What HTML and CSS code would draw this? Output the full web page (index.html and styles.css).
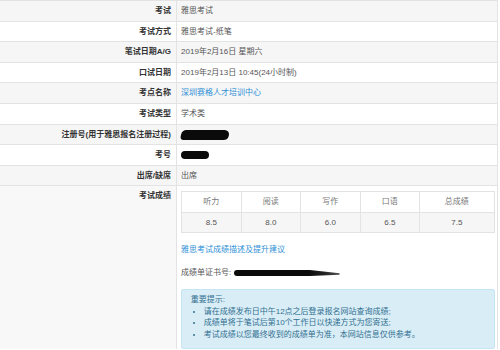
FILE: index.html
```html
<!DOCTYPE html>
<html lang="zh-CN">
<head>
    <meta charset="UTF-8">
    <meta name="viewport" content="width=device-width, initial-scale=1.0">
    <title>雅思成绩查询</title>
    <link rel="stylesheet" href="styles.css">
</head>
<body>
    <table class="info-table">
        <tr>
            <th>考试</th>
            <td>雅思考试</td>
        </tr>
        <tr>
            <th>考试方式</th>
            <td>雅思考试-纸笔</td>
        </tr>
        <tr>
            <th>笔试日期A/G</th>
            <td>2019年2月16日 星期六</td>
        </tr>
        <tr>
            <th>口试日期</th>
            <td>2019年2月13日 10:45(24小时制)</td>
        </tr>
        <tr>
            <th>考点名称</th>
            <td><a href="#" class="link">深圳赛格人才培训中心</a></td>
        </tr>
        <tr>
            <th>考试类型</th>
            <td>学术类</td>
        </tr>
        <tr>
            <th>注册号(用于雅思报名注册过程)</th>
            <td><span class="redact redact-reg"></span></td>
        </tr>
        <tr>
            <th>考号</th>
            <td><span class="redact redact-id"></span></td>
        </tr>
        <tr>
            <th>出席/缺席</th>
            <td>出席</td>
        </tr>
        <tr class="score-row">
            <th>考试成绩</th>
            <td>
                <table class="score-table">
                    <tr>
                        <td>听力</td>
                        <td>阅读</td>
                        <td>写作</td>
                        <td>口语</td>
                        <td>总成绩</td>
                    </tr>
                    <tr class="score-values">
                        <td>8.5</td>
                        <td>8.0</td>
                        <td>6.0</td>
                        <td>6.5</td>
                        <td>7.5</td>
                    </tr>
                </table>

                <p class="advice"><a href="#" class="link">雅思考试成绩描述及提升建议</a></p>

                <p class="cert">成绩单证书号: <span class="redact redact-cert"></span></p>

                <div class="alert">
                    <p>重要提示:</p>
                    <ul>
                        <li>请在成绩发布日中午12点之后登录报名网站查询成绩;</li>
                        <li>成绩单将于笔试后第10个工作日以快递方式为您寄送;</li>
                        <li>考试成绩以您最终收到的成绩单为准，本网站信息仅供参考。</li>
                    </ul>
                </div>
            </td>
        </tr>
    </table>
</body>
</html>
```

FILE: styles.css
```css
* {
    margin: 0;
    padding: 0;
    box-sizing: border-box;
}

body {
    font-family: 'Liberation Sans', 'Noto Sans CJK SC', sans-serif;
    font-size: 8px;
    line-height: 11.4px;
    color: #555;
    background: #fff;
}

.info-table {
    width: 498px;
    border-collapse: collapse;
}

.info-table > tbody > tr > th,
.info-table > tbody > tr > td {
    border-top: 1px solid #e3e3e3;
    padding: 4.1px 4.6px;
    vertical-align: top;
    text-align: left;
}

.info-table > tbody > tr > th {
    width: 176px;
    text-align: right;
    color: #333;
    font-weight: bold;
    border-right: 1px solid #e3e3e3;
}

.info-table > tbody > tr > td {
    border-right: 1px solid #e3e3e3;
}

.info-table > tbody > tr:nth-child(odd) {
    background: #f6f6f6;
}

.info-table > tbody > tr.score-row > th {
    background: #f8f8f8;
}

.info-table > tbody > tr.score-row > td {
    background: #fff;
    padding: 4.6px 2.5px 0 4.6px;
}

.link {
    color: #2e8fd6;
    text-decoration: none;
}

.redact {
    display: inline-block;
    background: #0a0a0a;
    vertical-align: middle;
}

.redact-reg {
    width: 48px;
    height: 10px;
    border-radius: 5px 6px 5px 4px;
    transform: skewX(-12deg);
}

.redact-id {
    width: 28px;
    height: 8px;
    border-radius: 4px;
}

.redact-cert {
    width: 106px;
    height: 6px;
    border-radius: 3px 1px 1px 3px;
    background: linear-gradient(to right, #0a0a0a 70%, #222 85%, #555 100%);
    clip-path: polygon(0 0, 72% 0, 100% 55%, 100% 80%, 72% 100%, 0 100%);
}

.score-table {
    width: 100%;
    border-collapse: collapse;
    border: 1px solid #e3e3e3;
    margin-bottom: 10.6px;
}

.score-table td {
    width: 59.5px;
    text-align: center;
    padding: 4.1px 4.6px;
    border: 1px solid #e3e3e3;
    color: #777;
}

.score-table td:last-child {
    width: auto;
}

.score-values td {
    background: #f6f6f6;
    color: #555;
}

.advice {
    margin-bottom: 12px;
}

.cert {
    margin-bottom: 10px;
}

.alert {
    background: #d9edf7;
    border: 1px solid #c6e5f3;
    border-radius: 2px;
    color: #31708f;
    padding: 4.6px 8.6px 8px;
}

.alert ul {
    padding-left: 13px;
}

.alert li {
    line-height: 11.6px;
}
```
